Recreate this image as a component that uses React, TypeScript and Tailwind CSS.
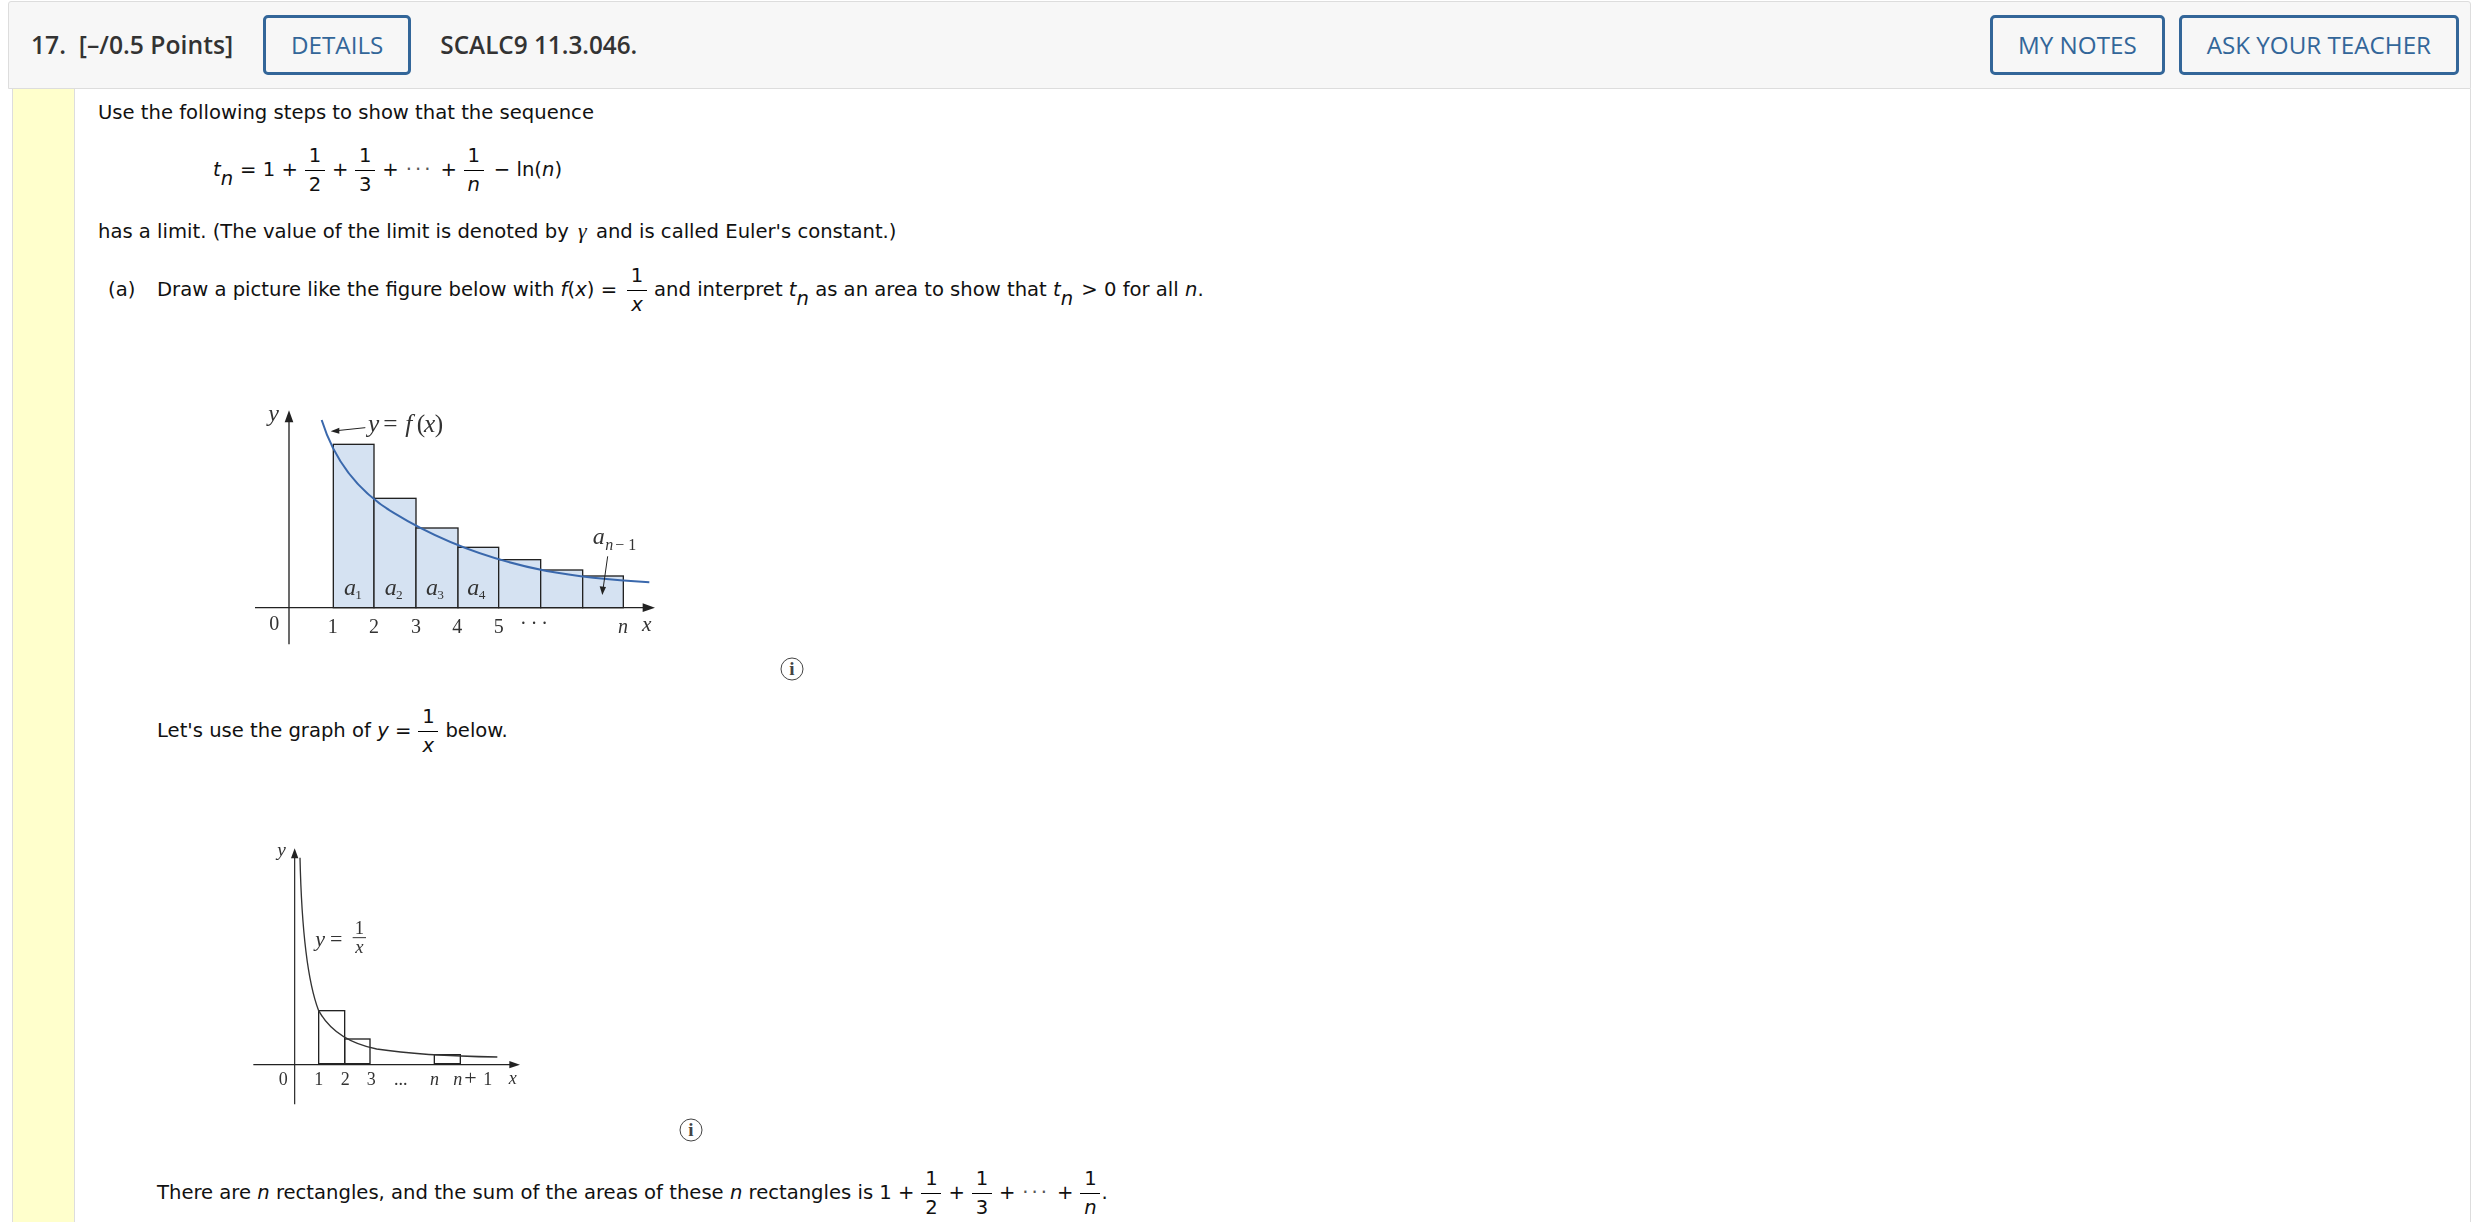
const bodyFont = "font-['DejaVu_Sans','Liberation_Sans',sans-serif] text-[19.6px] leading-6 text-[#111]";

function Frac({ top, bottom, italic = false }: { top: string; bottom: string; italic?: boolean }) {
  return (
    <span className="mx-[7px] inline-flex w-[20px] flex-col items-center align-middle leading-[24px]">
      <span>{top}</span>
      <span className="my-[2px] h-px w-full bg-black" />
      <span className={italic ? 'italic' : ''}>{bottom}</span>
    </span>
  );
}

function Sub({ children }: { children: string }) {
  return <span className="relative top-[9px] italic">{children}</span>;
}

function Dots() {
  return <span className="mx-[7px] tracking-[3px] text-[#555]">···</span>;
}

function InfoIcon() {
  return (
    <svg width="24" height="24" viewBox="0 0 24 24" className="block">
      <circle cx="12" cy="12" r="11" fill="none" stroke="#444" strokeWidth="1" />
      <text x="12" y="18" textAnchor="middle" fontFamily="Liberation Serif" fontWeight="700" fontSize="19" fill="#444">
        i
      </text>
    </svg>
  );
}

function HeaderButton({ label }: { label: string }) {
  return (
    <button className="h-[60px] rounded-[5px] border-[3px] border-[#336699] px-[25px] font-['Open_Sans',sans-serif] text-[24.2px] font-medium text-[#336699]">
      {label}
    </button>
  );
}

function SumFigure() {
  const serif = 'Liberation Serif';
  const rects = [
    [340, 190, 122],
    [462, 352, 126],
    [588, 441, 126],
    [714, 499, 122],
    [836, 536, 126],
    [962, 567, 126],
    [1088, 585, 122],
  ];
  const ticks = [
    ['1', 338],
    ['2', 462],
    ['3', 588],
    ['4', 712],
    ['5', 836],
  ] as const;
  const labels = [
    ['1', 372],
    ['2', 494],
    ['3', 618],
    ['4', 742],
  ] as const;
  return (
    <svg viewBox="0 0 1380 810" width="460" height="270" className="ml-[122px] mt-[60px] block blur-[0.5px]">
      {rects.map(([x, y, w]) => (
        <rect key={x} x={x} y={y} width={w} height={680 - y} fill="#d5e2f2" stroke="#222" strokeWidth="4" />
      ))}
      <path d="M305 117C345 245 420 335 520 395C650 475 800 535 980 570C1090 590 1190 598 1288 604" fill="none" stroke="#3a68ac" strokeWidth="6" />
      <path d="M207 790V110M105 680H1285" fill="none" stroke="#222" strokeWidth="4" />
      <path d="M207 88L220 124H194ZM1305 680L1268 667V693Z" fill="#222" />
      <path d="M436 140L350 149" fill="none" stroke="#222" strokeWidth="3" />
      <path d="M332 151L358 140V158Z" fill="#222" />
      <path d="M1163 526L1149 625" fill="none" stroke="#222" strokeWidth="3" />
      <path d="M1147 642L1139 616L1158 618Z" fill="#222" />
      <g fontFamily={serif} fill="#333">
        <text x="145" y="120" fontSize="72" fontStyle="italic">y</text>
        <text x="444" y="154" fontSize="76" fontStyle="italic">y</text>
        <text x="490" y="154" fontSize="76">=</text>
        <text x="556" y="154" fontSize="76" fontStyle="italic">f</text>
        <text x="590" y="154" fontSize="76">(</text>
        <text x="612" y="154" fontSize="76" fontStyle="italic">x</text>
        <text x="644" y="154" fontSize="76">)</text>
        <text x="1118" y="488" fontSize="72" fontStyle="italic">a</text>
        <text x="1156" y="506" fontSize="48" fontStyle="italic">n</text>
        <text x="1186" y="506" fontSize="48">− 1</text>
        <text x="148" y="748" fontSize="60">0</text>
        {ticks.map(([t, x]) => (
          <text key={t} x={x} y="755" fontSize="60" textAnchor="middle">{t}</text>
        ))}
        <text x="900" y="748" fontSize="60" letterSpacing="12">···</text>
        <text x="1194" y="755" fontSize="60" fontStyle="italic">n</text>
        <text x="1266" y="750" fontSize="64" fontStyle="italic">x</text>
        {labels.map(([t, x]) => (
          <g key={t}>
            <text x={x} y="642" fontSize="72" fontStyle="italic">a</text>
            <text x={x + 34} y="655" fontSize="40">{t}</text>
          </g>
        ))}
      </g>
    </svg>
  );
}

function HyperbolaFigure() {
  const serif = 'Liberation Serif';
  const rects = [
    [296, 569, 78],
    [374, 654, 76],
    [643, 701, 78],
  ];
  return (
    <svg viewBox="0 0 1020 870" width="340" height="290" className="ml-[122px] mt-[60px] block blur-[0.5px]">
      {rects.map(([x, y, w]) => (
        <rect key={x} x={x} y={y} width={w} height={728 - y} fill="none" stroke="#222" strokeWidth="4" />
      ))}
      <path d="M240 110C245 330 262 480 296 569C330 630 390 668 470 684C560 698 700 706 832 708" fill="none" stroke="#333" strokeWidth="4" />
      <path d="M224 850V100M100 731H880" fill="none" stroke="#222" strokeWidth="3.5" />
      <path d="M224 82L235 112H213ZM900 731L868 720V742Z" fill="#222" />
      <g fontFamily={serif} fill="#333">
        <text x="172" y="106" fontSize="58" fontStyle="italic">y</text>
        <text x="286" y="376" fontSize="66" fontStyle="italic">y</text>
        <text x="330" y="376" fontSize="66">=</text>
        <text x="418" y="338" fontSize="56" textAnchor="middle">1</text>
        <path d="M398 350H438" stroke="#333" strokeWidth="3" />
        <text x="418" y="396" fontSize="56" fontStyle="italic" textAnchor="middle">x</text>
        <text x="176" y="792" fontSize="54">0</text>
        <text x="296" y="792" fontSize="54" textAnchor="middle">1</text>
        <text x="376" y="792" fontSize="54" textAnchor="middle">2</text>
        <text x="454" y="792" fontSize="54" textAnchor="middle">3</text>
        <text x="522" y="792" fontSize="54">...</text>
        <text x="630" y="792" fontSize="54" fontStyle="italic">n</text>
        <text x="700" y="792" fontSize="54" fontStyle="italic">n</text>
        <text x="733" y="792" fontSize="66">+</text>
        <text x="790" y="792" fontSize="54">1</text>
        <text x="866" y="790" fontSize="54" fontStyle="italic">x</text>
      </g>
    </svg>
  );
}

export default function App() {
  return (
    <div className="h-[1222px] overflow-hidden bg-white pl-[8px] pr-[4px] pt-[1px]">
      {/* Question header */}
      <div className="flex h-[88px] items-center rounded-t-[3px] border border-[#dddddd] bg-[#f7f7f7] pl-[22px] pr-[11px]">
        <span className="mr-[30px] whitespace-pre font-['Open_Sans',sans-serif] text-[24.7px] font-semibold text-[#333]">
          17.  [–/0.5 Points]
        </span>
        <HeaderButton label="DETAILS" />
        <span className="ml-[29px] font-['Open_Sans',sans-serif] text-[24.3px] font-semibold text-[#333]">SCALC9 11.3.046.</span>
        <div className="ml-auto flex gap-[14px]">
          <HeaderButton label="MY NOTES" />
          <HeaderButton label="ASK YOUR TEACHER" />
        </div>
      </div>

      <div className="flex h-[1200px] border-r border-[#dddddd]">
        <div className="ml-[4px] w-[63px] shrink-0 border-x border-[#dddddd] bg-[#ffffcc]" />
        <div className={`flex-1 pl-[23px] pt-[12px] ${bodyFont}`}>
          <p>Use the following steps to show that the sequence</p>

          <div className="ml-[115px] mt-[9px] flex h-[72px] items-center">
            <span className="italic">t</span>
            <Sub>n</Sub>
            <span className="ml-[7px]">= 1 +</span>
            <Frac top="1" bottom="2" />
            <span>+</span>
            <Frac top="1" bottom="3" />
            <span>+</span>
            <Dots />
            <span>+</span>
            <Frac top="1" bottom="n" italic />
            <span className="ml-[3px] whitespace-pre">− ln(<span className="italic">n</span>)</span>
          </div>

          <p className="mt-[13px]">
            has a limit. (The value of the limit is denoted by{' '}
            <span className="mx-[3px] font-['Liberation_Serif',serif] text-[22px] italic">γ</span> and is called Euler's constant.)
          </p>

          <div className="ml-[10px] mt-[16px] flex h-[60px] items-center">
            <span className="w-[49px]">(a)</span>
            <span className="flex items-center whitespace-pre">
              Draw a picture like the figure below with <span className="italic">f</span>(<span className="italic">x</span>) =
              <span className="w-[3px]" />
              <Frac top="1" bottom="x" italic />
              and interpret <span className="italic">t</span>
              <Sub>n</Sub> as an area to show that <span className="italic">t</span>
              <Sub>n</Sub><span className="w-[2px]" /> &gt; 0 for all <span className="italic">n</span>.
            </span>
          </div>

          <div className="pt-px">
            <SumFigure />
          </div>
          <div className="ml-[682px] mt-[6px]">
            <InfoIcon />
          </div>

          <div className="ml-[59px] mt-[20px] flex h-[60px] items-center whitespace-pre">
            Let's use the graph of <span className="italic">y</span> =
            <Frac top="1" bottom="x" italic />
            below.
          </div>

          <HyperbolaFigure />
          <div className="ml-[581px] mt-[7px]">
            <InfoIcon />
          </div>

          <div className="ml-[59px] mt-[21px] flex h-[60px] items-center whitespace-pre">
            There are <span className="italic">n</span> rectangles, and the sum of the areas of these <span className="italic">n</span> rectangles is 1 +
            <Frac top="1" bottom="2" />
            +
            <Frac top="1" bottom="3" />
            +
            <Dots />
            +
            <Frac top="1" bottom="n" italic />
            <span className="-ml-[6px]">.</span>
          </div>
        </div>
      </div>
    </div>
  );
}
